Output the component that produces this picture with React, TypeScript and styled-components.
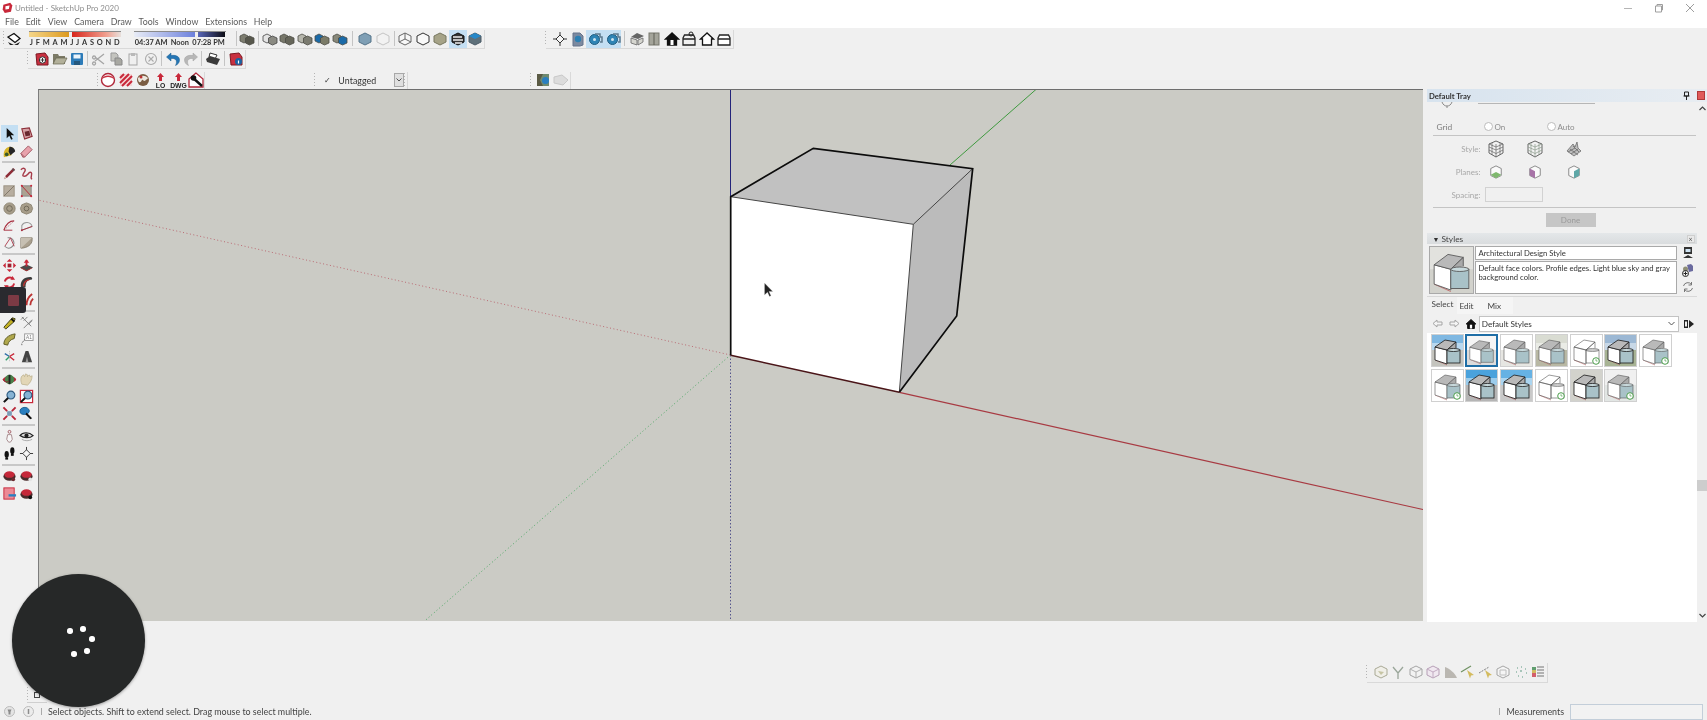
import React from 'react';
import styled, { createGlobalStyle } from 'styled-components';

const Global = createGlobalStyle`
  html, body { margin: 0; padding: 0; background: #f0f0f0; overflow: hidden; }
  * { box-sizing: border-box; }
`;

const Root = styled.div`
  position: relative;
  width: 1707px;
  height: 720px;
  display: flex;
  flex-direction: column;
  background: #f0f0f0;
  font-family: Lato, "Open Sans", sans-serif;
  color: #444;
  overflow: hidden;
  filter: blur(0.35px);
`;

const Header = styled.header`
  height: 28px;
  flex: none;
  background: #fff;
  display: flex;
  flex-direction: column;
`;
const TitleBar = styled.div`
  height: 15px;
  display: flex;
  align-items: center;
  padding-left: 2px;
`;
const TitleText = styled.span`
  margin-left: 2px;
  font-size: 8px;
  color: #8d8d8d;
`;
const WindowControls = styled.div`
  margin-left: auto;
  display: flex;
  padding-right: 2px;
`;
const WindowButton = styled.span`
  width: 31px;
  height: 14px;
  display: flex;
  align-items: center;
  justify-content: center;
`;
const MenuBar = styled.nav`
  height: 13px;
  display: flex;
  align-items: center;
  padding-left: 5px;
  gap: 6.9px;
`;
const MenuItem = styled.span`
  font-size: 8.8px;
  color: #5c5c5c;
`;

const Dock = styled.div`
  flex: none;
  height: 61px;
  display: flex;
  flex-direction: column;
`;
const DockRow = styled.div<{ $h: number; $pad: number }>`
  height: ${p => p.$h}px;
  display: flex;
  align-items: flex-end;
  padding-left: ${p => p.$pad}px;
`;
const Toolbar = styled.div<{ $gapLeft?: number; $h?: number }>`
  height: ${p => p.$h ?? 19}px;
  margin-left: ${p => p.$gapLeft ?? 0}px;
  display: flex;
  align-items: center;
  background: #f0f0f0;
  box-shadow: 1px 1px 0 #d9d9d9;
`;
const Grip = styled.span<{ $w: number }>`
  flex: none;
  width: ${p => p.$w}px;
  height: 15px;
  background: repeating-linear-gradient(#b5b5b5 0 1px, transparent 1px 3px) 0 0 / 1px 100% no-repeat;
`;
const ToolSlot = styled.span<{ $active?: boolean }>`
  flex: none;
  width: 17.5px;
  height: 18px;
  display: flex;
  align-items: center;
  justify-content: center;
  background: ${p => (p.$active ? '#c4dff3' : 'transparent')};
`;
const Sep = styled.span<{ $w: number }>`
  flex: none;
  width: ${p => p.$w}px;
  height: 15px;
  display: flex;
  justify-content: center;
  &::after { content: ""; width: 1px; background: #c4c4c4; }
`;
const ShadowBlock = styled.div`
  flex: none;
  width: 210.75px;
  padding-left: 6px;
  display: flex;
  gap: 13px;
`;
const SliderColumn = styled.div`
  width: 92px;
  display: flex;
  flex-direction: column;
`;
const SliderTrack = styled.div`
  height: 6px;
  display: flex;
  gap: 3px;
  border-top: 1px solid #8b8b8b;
`;
const SliderFill = styled.span<{ $w: number; $bg: string }>`
  width: ${p => p.$w}px;
  height: 5px;
  background: ${p => p.$bg};
`;
const SliderLabels = styled.div`
  margin-top: 1px;
  padding: 0 1px;
  display: flex;
  justify-content: space-between;
  font-size: 7.4px;
  line-height: 9px;
  font-weight: 700;
  color: #333;
`;
const TagCheck = styled.span`
  width: 22px;
  text-align: right;
  padding-right: 7px;
  font-size: 8px;
  color: #333;
`;
const TagName = styled.span`
  width: 56px;
  font-size: 8.8px;
  letter-spacing: 0.1px;
  color: #333;
`;
const TagArrow = styled.span`
  width: 10px;
  height: 14px;
  display: flex;
  align-items: center;
  justify-content: center;
  background: #e0e0e0;
  border: 1px solid #a8a8a8;
`;

const Main = styled.main`
  flex: none;
  height: 533px;
  display: flex;
`;
const LeftTools = styled.aside`
  width: 38px;
  flex: none;
  padding-top: 36px;
  display: flex;
  flex-direction: column;
  align-items: flex-start;
`;
const ToolGrid = styled.div`
  display: grid;
  grid-template-columns: 17.3px 17.3px;
  grid-auto-rows: 17.35px;
  padding-left: 1px;
  justify-items: center;
  align-items: center;
`;
const ToolDivider = styled.span`
  width: 33px;
  height: 2px;
  margin: 1.5px 0 1.5px 2px;
  background: #c8c8c8;
`;
const ActiveCell = styled.span<{ $active?: boolean }>`
  width: 17px;
  height: 17px;
  display: flex;
  align-items: center;
  justify-content: center;
  background: ${p => (p.$active ? '#c4dff3' : 'transparent')};
`;
const Viewport = styled.section`
  width: 1385px;
  height: 532px;
  flex: none;
  background: #cbcbc5;
  border-left: 1px solid #7c7c7c;
  border-top: 1px solid #6e6e6e;
  overflow: hidden;
`;
const Scene = styled.svg`
  display: block;
`;

const Tray = styled.aside`
  margin-left: 3px;
  flex: 1;
  display: flex;
  flex-direction: column;
`;
const TrayTitle = styled.div`
  height: 13px;
  margin-left: 1px;
  flex: none;
  display: flex;
  align-items: center;
  padding-left: 2px;
  background: linear-gradient(90deg, #d7e3ee, #e8edf2);
  font-size: 7.7px;
  font-weight: 700;
  color: #333;
`;
const TrayTitleIcons = styled.span`
  margin-left: auto;
  display: flex;
  align-items: center;
  gap: 7px;
  padding-right: 3px;
`;
const CloseBox = styled.span`
  width: 8px;
  height: 9px;
  background: #e05a5a;
  border: 1px solid #b03a3a;
  display: flex;
`;
const TrayBody = styled.div`
  flex: 1;
  display: flex;
`;
const TrayContent = styled.div`
  width: 270px;
  margin-left: 0.5px;
  display: flex;
  flex-direction: column;
`;
const Scroller = styled.div`
  width: 11px;
  display: flex;
  flex-direction: column;
  align-items: center;
  padding-top: 4px;
`;
const ScrollThumb = styled.span`
  width: 10px;
  height: 11px;
  margin-top: 369px;
  margin-bottom: 122px;
  background: #cdcdcd;
`;
const EntitySection = styled.div`
  height: 131px;
  flex: none;
  font-size: 8px;
  color: #a2a2a2;
  display: flex;
  flex-direction: column;
`;
const StubRow = styled.div`
  height: 8px;
  display: flex;
  padding-left: 13px;
  gap: 24px;
  align-items: flex-start;
`;
const StubLine = styled.span`
  width: 117px;
  height: 1px;
  background: #b6b6b6;
  margin-top: 0.5px;
`;
const GridRow = styled.div`
  margin-top: 10px;
  height: 13px;
  display: flex;
  align-items: center;
  padding-left: 10px;
`;
const GridLabel = styled.span`
  width: 47px;
  font-size: 8.4px;
  color: #7f7f7f;
`;
const RadioLabel = styled.label<{ $w: number }>`
  width: ${p => p.$w}px;
  display: flex;
  align-items: center;
  gap: 2px;
  color: #8c8c8c;
`;
const Radio = styled.span`
  width: 9px;
  height: 9px;
  border-radius: 50%;
  background: #fff;
  border: 1px solid #bcbcbc;
`;
const Rule = styled.hr<{ $mt: number }>`
  margin: ${p => p.$mt}px 0 0 6px;
  width: 263px;
  height: 1px;
  border: 0;
  background: #c4c4c4;
`;
const OptionGrid = styled.div`
  margin-top: 1px;
  display: grid;
  grid-template-columns: 54px 30px 48px 30px;
  grid-auto-rows: 23px;
  align-items: center;
  justify-items: center;
`;
const OptionLabel = styled.span`
  justify-self: end;
  font-size: 8px;
  color: #a8a8a8;
`;
const SpacingRow = styled.div`
  display: grid;
  grid-template-columns: 54px 58px;
  gap: 4px;
  align-items: center;
  margin-top: 4px;
  height: 15px;
`;
const SpacingInput = styled.span`
  height: 15px;
  border: 1px solid #d2d2d2;
`;
const DoneRow = styled.div`
  margin-top: 5px;
  padding-left: 119px;
`;
const DoneButton = styled.span`
  display: flex;
  align-items: center;
  justify-content: center;
  width: 50px;
  height: 14px;
  background: #c6c6c6;
  font-size: 8px;
  color: #9a9a9a;
`;
const SectionHead = styled.div`
  height: 11px;
  flex: none;
  display: flex;
  align-items: center;
  padding-left: 6px;
  background: linear-gradient(#e4e7e9, #d9dcde);
  font-size: 8.4px;
  color: #444;
`;
const HeadTriangle = styled.span`
  width: 9px;
  font-size: 7px;
  color: #333;
`;
const HeadClose = styled.span`
  margin-left: auto;
  margin-right: 2px;
  width: 8px;
  height: 8px;
  font-size: 7px;
  line-height: 7px;
  text-align: center;
  color: #555;
  background: #e9e9e9;
  border: 1px solid #cfcfcf;
`;
const InfoRow = styled.div`
  margin-top: 2px;
  height: 48px;
  flex: none;
  display: flex;
  padding-left: 2px;
`;
const PreviewFrame = styled.span`
  width: 45px;
  height: 48px;
  flex: none;
  border: 1px solid #a9a9a9;
  display: flex;
`;
const InfoFields = styled.div`
  width: 204px;
  margin-left: 1px;
  display: flex;
  flex-direction: column;
  gap: 1px;
`;
const NameField = styled.div`
  height: 14px;
  background: #fff;
  border: 1px solid #a9a9a9;
  padding-left: 3px;
  font-size: 7.7px;
  line-height: 12px;
  color: #333;
`;
const DescField = styled.div`
  height: 33px;
  background: #fff;
  border: 1px solid #a9a9a9;
  padding: 2px 3px;
  font-size: 7.7px;
  line-height: 9px;
  color: #333;
`;
const InfoIcons = styled.div`
  width: 18px;
  margin-left: 2px;
  display: flex;
  flex-direction: column;
  align-items: center;
  justify-content: space-between;
  padding: 0 0 1px;
`;
const TabRow = styled.div`
  margin-top: 2px;
  height: 18px;
  flex: none;
  border-top: 1px solid #d8d8d8;
  display: flex;
  padding-left: 2px;
`;
const Tab = styled.span<{ $w: number; $active?: boolean }>`
  width: ${p => p.$w}px;
  padding: ${p => (p.$active ? '2px 0 0 3px' : '4px 0 0 3px')};
  font-size: 8.2px;
  color: #444;
  background: ${p => (p.$active ? '#f0f0f0' : '#f5f5f5')};
`;
const NavRow = styled.div`
  height: 19px;
  flex: none;
  display: flex;
  align-items: center;
  padding-left: 3px;
`;
const NavSlot = styled.span`
  width: 16.5px;
  display: flex;
  justify-content: center;
`;
const NavSelect = styled.div`
  width: 201px;
  height: 16px;
  background: #fff;
  border: 1px solid #c3c3c3;
  display: flex;
  align-items: center;
  justify-content: space-between;
  padding: 0 3px 0 2px;
  font-size: 8.2px;
  color: #333;
`;
const NavEnd = styled.span`
  margin-left: 2px;
  width: 16px;
  display: flex;
  justify-content: center;
`;
const ThumbArea = styled.div`
  flex: 1;
  background: #fff;
  display: grid;
  grid-template-columns: repeat(7, 33px);
  grid-auto-rows: 33px;
  column-gap: 1.75px;
  row-gap: 2px;
  align-content: start;
  padding: 1px 0 0 4px;
`;
const ThumbCell = styled.span<{ $selected?: boolean }>`
  display: flex;
  width: 33px;
  height: 33px;
  border: ${p => (p.$selected ? '2px solid #1f6ea6' : '1px solid #d0d0d0')};
`;

const LowerDock = styled.div`
  flex: none;
  height: 81px;
  display: flex;
  align-items: flex-start;
`;
const LowerStub = styled.div`
  margin: 65px 0 0 27px;
  width: 20px;
  height: 15px;
  display: flex;
  align-items: center;
  box-shadow: 0 1px 0 #cfcfcf;
`;
const StubBox = styled.span`
  margin-left: 6px;
  width: 6px;
  height: 6px;
  border: 1px solid #444;
`;
const ViewsBar = styled(Toolbar)`
  margin: 40px 160px 0 auto;
  height: 20px;
  svg { opacity: 0.72; }
`;
const StatusBar = styled.footer`
  flex: 1;
  display: flex;
  align-items: center;
  font-size: 8.9px;
  color: #444;
`;
const StatusIcon = styled.span`
  width: 19px;
  display: flex;
  justify-content: center;
`;
const StatusSep = styled.span<{ $ml: number }>`
  margin-left: ${p => p.$ml}px;
  width: 1px;
  height: 7px;
  background: #aaa;
`;
const StatusText = styled.span`
  margin-left: 6px;
`;
const MeasureLabel = styled.span`
  margin-left: 6px;
`;
const MeasureBox = styled.span`
  margin-left: 6px;
  width: 133px;
  height: 16px;
  background: #f2f2f2;
  border: 1px solid #c3ced9;
`;
const StatusRight = styled.div`
  margin-left: auto;
  margin-right: 4px;
  display: flex;
  align-items: center;
`;

const Spinner = styled.div`
  position: absolute;
  left: 12px;
  top: 574px;
  width: 133px;
  height: 133px;
  border-radius: 50%;
  background: #262828;
  box-shadow: 0 1px 3px rgba(0,0,0,.35);
`;
const SpinnerDot = styled.span<{ $x: number; $y: number }>`
  position: absolute;
  left: ${p => p.$x - 2.7}px;
  top: ${p => p.$y - 2.7}px;
  width: 5.4px;
  height: 5.4px;
  border-radius: 50%;
  background: #fff;
`;
const RecordBox = styled.div`
  position: absolute;
  left: 0;
  top: 287px;
  width: 26px;
  height: 26px;
  border-radius: 0 3px 3px 0;
  background: #2a2a2f;
  display: flex;
  align-items: center;
  justify-content: center;
`;
const RecordSquare = styled.span`
  width: 11px;
  height: 11px;
  border-radius: 1px;
  background: #7c3a44;
`;

const Svg: React.FC<{ s?: number; children: React.ReactNode }> = ({ s = 16, children }) => (
  <svg width={s} height={s} viewBox="0 0 16 16" aria-hidden="true">{children}</svg>
);

const hex = (fill: string, stroke = '#6f6f6f', extra?: React.ReactNode) => (
  <>
    <path d="M8 2l6 3v6l-6 3-6-3V5z" fill={fill} stroke={stroke} />
    {extra}
  </>
);
const stack = (a: string, b: string, st = '#4d4d45') => (
  <>
    <path d="M1 5l4-2 4 2v5l-4 2-4-2z" fill={a} stroke={st} strokeWidth=".8" />
    <path d="M6.5 7l4-2 4.500 2v5l-4.500 2-4-2z" fill={b} stroke={st} strokeWidth=".8" />
  </>
);
const lens = (extra?: React.ReactNode) => (
  <>
    {extra}
    <circle cx="9.500" cy="6.500" r="4.200" fill="#86b3d4" stroke="#2d5a80" strokeWidth="1.200" />
    <path d="M6.500 9.500L2 14" stroke="#111" strokeWidth="2.200" />
  </>
);
const home = (fill: string, stroke: string, door?: boolean) => (
  <>
    <path d="M8 2L1.500 8H3.500v6h9V8h2z" fill={fill} stroke={stroke} strokeWidth="1.300" />
    {door && <rect x="6.500" y="9" width="3" height="5" fill="#fff" />}
  </>
);
const chest = (top: boolean) => (
  <>
    {top && <circle cx="10" cy="3" r="2" fill="none" stroke="#222" />}
    <path d="M2 7l1.500-3h9L14 7v7H2zM2 8h12" fill={top ? 'none' : '#fff'} stroke="#222" strokeWidth="1.300" />
  </>
);
const crosshair = (
  <>
    <path d="M8 1v14M1 8h14" stroke="#333" strokeWidth="1" />
    <path d="M8 4l4 4-4 4-4-4z" fill="#f6f6f6" stroke="#333" />
  </>
);
const sphereGear = (
  <>
    <circle cx="7.500" cy="8.500" r="5" fill="#2f84b5" stroke="#1e5c80" />
    <path d="M8 3h5v3h2v5h-2" fill="none" stroke="#5e7b8e" strokeWidth="1.500" />
    <circle cx="7.500" cy="8.500" r="1.500" fill="#cde3ef" />
  </>
);
const redBtn = (badge: string) => (
  <>
    <ellipse cx="8" cy="9" rx="6.500" ry="4.500" fill="#4a2c2c" />
    <ellipse cx="8" cy="7" rx="5.500" ry="3.500" fill="#c5283a" />
    <circle cx="12" cy="12" r="2" fill={badge} />
  </>
);

const icons: Record<string, React.ReactNode> = {
  shadow: (
    <>
      <path d="M2 11l6 3 6-3-2 3H4z" fill="#222" />
      <path d="M2 6l6-3.500 6 5-5 4z" fill="#fff" stroke="#111" strokeWidth="1.300" />
    </>
  ),
  s1: stack('#7d7d70', '#57574c'),
  s2: stack('#e4e4e4', '#8a8a82', '#444'),
  s3: stack('#77776a', '#66665a'),
  s4: stack('#b6b6ac', '#7b7b70'),
  s5: stack('#1a6aa8', '#7b7b68'),
  s6: stack('#88887a', '#1a6aa8'),
  hexBlue: hex('#7f9fb5', '#55748a'),
  hexPale: hex('#f2f2f2', '#c4c4c4'),
  hexWire: hex('#f7f7f7', '#666', <path d="M8 2v6L2 11M8 8l6 3" stroke="#666" fill="none" />),
  hexHollow: hex('#f9f9f9', '#333'),
  hexOlive: hex('#a6a388', '#77775f'),
  hexStripe: hex('#333', '#111', <path d="M3 6l9 0M3 9l10 0M5 12l7 0" stroke="#eee" strokeWidth="1.300" />),
  hexTop: hex('#5e707a', '#4a5a66', <path d="M2 5l6-3 6 3-6 3z" fill="#2888c8" />),
  cross: crosshair,
  docBlue: (
    <>
      <path d="M3 2h7l3 3v9l-3 1H3z" fill="#7c8aa0" stroke="#64728a" />
      <circle cx="8" cy="8" r="3.200" fill="#2c7fb2" />
    </>
  ),
  sphere: sphereGear,
  houseIso: (
    <>
      <path d="M8 2l7 3-6 3-7-2z" fill="#666" />
      <path d="M2 7l6 2v5l-6-2zM9 9l5-2v4l-5 3z" fill="#d6d6d0" stroke="#666" strokeWidth=".8" />
    </>
  ),
  door: (
    <>
      <rect x="3" y="2" width="10" height="12" fill="#a4a49a" stroke="#77776c" />
      <path d="M8 2v12" stroke="#5e5e55" />
    </>
  ),
  homeBlack: home('#111', '#111', true),
  boxLock: chest(true),
  homeOpen: home('#fff', '#111'),
  box: chest(false),
  newDoc: (
    <>
      <path d="M2 3l9-1 3 4v8H3z" fill="#c83040" stroke="#7c1822" />
      <circle cx="8.500" cy="9" r="3.200" fill="#fff" stroke="#333" />
      <path d="M6.500 9h4M8.500 7v4" stroke="#333" />
    </>
  ),
  folder: (
    <>
      <path d="M1 3h5l1 2h6v8H1z" fill="#7c7a66" />
      <path d="M4 7h11l-3 6H1z" fill="#b2b09a" stroke="#66644f" strokeWidth=".7" />
    </>
  ),
  save: (
    <>
      <rect x="2" y="2" width="12" height="12" rx="1" fill="#2c7bb8" />
      <rect x="4.500" y="3.500" width="7" height="4" fill="#eaf4fb" />
      <rect x="5" y="10" width="6" height="4" fill="#25587e" />
    </>
  ),
  scissors: <path d="M14 3L5 10M14 13L5 6M4 5a1.500 1.500 0 1 0 .1 0M4 11a1.500 1.500 0 1 0 .1 0" stroke="#a5a5a5" strokeWidth="1.300" fill="none" />,
  copy: (
    <>
      <path d="M3 2h5l2 2v6H3z" fill="#c4c4bf" stroke="#999" />
      <path d="M7 7h5l2 2v5H7z" fill="#a8a8a2" stroke="#888" />
    </>
  ),
  paste: (
    <>
      <rect x="4" y="3" width="8" height="11" fill="#efefef" stroke="#a5a5a5" />
      <rect x="6" y="2" width="4" height="3" fill="#b8b8b8" />
    </>
  ),
  cancel: (
    <>
      <circle cx="8" cy="8" r="5.500" fill="none" stroke="#aaa" strokeWidth="1.100" />
      <path d="M5.500 5.500l5 5M10.500 5.500l-5 5" stroke="#aaa" strokeWidth="1.100" />
    </>
  ),
  undo: <path d="M6 2L1.500 6 6 10V7.500c3.500-.5 5.500 1 5.500 3.500 0 1.200-.5 2.500-1 3.500 2.500-1 4-3 4-5.500C14.500 5.500 11 3.800 6 4.500z" fill="#2476b5" stroke="#1c5d8e" strokeWidth=".5" />,
  redo: <path d="M10 2l4.500 4L10 10V7.500C6.500 7 4.500 8.500 4.500 11c0 1.200.5 2.500 1 3.500-2.500-1-4-3-4-5.500C1.500 5.500 5 3.800 10 4.500z" fill="#b7b7b7" stroke="#a0a0a0" strokeWidth=".5" />,
  printer: (
    <>
      <path d="M5 2l7 2-2 4-6-2z" fill="#fff" stroke="#333" />
      <path d="M1 8l4-3 10 3-3 6-10-3z" fill="#3a3a3a" />
    </>
  ),
  infoDoc: (
    <>
      <path d="M2 3l9-1 3 4v8H3z" fill="#c83040" stroke="#7c1822" />
      <circle cx="10.500" cy="10.500" r="3.500" fill="#1b62a0" />
      <path d="M10.500 9.500v3" stroke="#fff" strokeWidth="1.200" />
    </>
  ),
  redCircle: (
    <>
      <circle cx="8" cy="8" r="6.500" fill="#fff" stroke="#b0283a" strokeWidth="1.400" />
      <path d="M1.500 7.500C5 4 11 4 14.500 7.500 13 2 3 2 1.500 7.500z" fill="#c83040" />
    </>
  ),
  hatch: (
    <>
      <rect x="2" y="2" width="12" height="12" fill="#f4d7d7" />
      <path d="M2 6l4-4M2 11l9-9M4 14l10-10M9 14l5-5" stroke="#c8283a" strokeWidth="2" />
    </>
  ),
  ball: (
    <>
      <circle cx="8" cy="8" r="6" fill="#7a5c42" />
      <path d="M3 6c3-3 7-3 10 0-1 2-2 1-3 3-2 0-2-2-3-1s-1 3-3 2c-1-1-1-3-1-4z" fill="#ece8df" />
      <circle cx="6" cy="5" r="1.500" fill="#b33" />
    </>
  ),
  homeWrench: (
    <>
      <path d="M8 1L1 7v8h14V7z" fill="#fff" stroke="#b0283a" strokeWidth="1.300" />
      <path d="M4 5l10 9" stroke="#111" strokeWidth="2.400" />
      <circle cx="5.500" cy="6" r="2.800" fill="#111" />
    </>
  ),
  preview: (
    <>
      <rect x="2" y="2" width="12" height="12" fill="#6f8a70" />
      <path d="M2 2h6l-3 6 3 6H2z" fill="#5a5a44" />
      <circle cx="10.500" cy="8.500" r="3.500" fill="#2a7fc0" />
    </>
  ),
  tagPale: <path d="M1 5l8-2 6 5-5 5-9-2z" fill="#dcdcdc" stroke="#c8c8c8" />,
  select: <path d="M5 2v11l2.800-2.500 2 4.200 1.600-.8-2-4H13z" fill="#111" />,
  comp: (
    <>
      <path d="M3 3l8-1 3 9-8 3z" fill="#d5a0a4" stroke="#8c2e38" strokeWidth="1.200" />
      <path d="M6 6l5-1 1 5-5 1z" fill="#67282e" />
    </>
  ),
  paint: (
    <>
      <path d="M2 14c-1-5 1-10 6-11l4 1-2 8z" fill="#d8b528" />
      <path d="M8 3c3 0 6 2 6 5l-5 4-2-4z" fill="#262626" />
      <circle cx="5" cy="11" r="2" fill="#3c5a28" />
    </>
  ),
  eraser: (
    <>
      <path d="M2 10l8-8 4 4-8 8H4z" fill="#e8a2ac" stroke="#a05560" />
      <path d="M2 10l4 4" stroke="#a05560" />
    </>
  ),
  pencil: (
    <>
      <path d="M2 14l2-4 8-8 2 2-8 8z" fill="#8e2c38" />
      <path d="M2 14l1.500-3 1.500 1.500z" fill="#dcb" />
      <path d="M11 3l2 2" stroke="#555" strokeWidth="1.500" />
    </>
  ),
  freehand: <path d="M2 4c3-3 6-1 4 2s-3 5 0 5 5-6 7-4-2 6 1 7" stroke="#a73c4a" strokeWidth="1.500" fill="none" />,
  rect: (
    <>
      <rect x="2" y="3" width="11" height="11" fill="#b7ad9f" stroke="#9a9082" />
      <path d="M2 14L13 3" stroke="#7f7568" />
    </>
  ),
  rotRect: (
    <>
      <rect x="3" y="3" width="10" height="11" fill="#ada292" stroke="#888" />
      <path d="M3 3L13 14" stroke="#b4293a" />
      <circle cx="3" cy="3" r="1.100" fill="#c8283a" />
      <circle cx="13" cy="3" r="1.100" fill="#c8283a" />
      <circle cx="3" cy="14" r="1.100" fill="#c8283a" />
      <circle cx="13" cy="14" r="1.100" fill="#c8283a" />
    </>
  ),
  circle: (
    <>
      <circle cx="8" cy="8" r="6" fill="#a79d8a" stroke="#8d8472" />
      <circle cx="8" cy="8" r="3" fill="none" stroke="#6f6858" />
    </>
  ),
  polygon: (
    <>
      <path d="M8 2l5 2 1.500 4-1.500 4-5 2-5-2L1.500 8 3 4z" fill="#a79d8a" stroke="#8d8472" />
      <circle cx="8" cy="8" r="2.500" fill="none" stroke="#6f6858" />
    </>
  ),
  arc1: (
    <>
      <path d="M2 13L13 3" stroke="#c28a92" strokeDasharray="2 1" />
      <path d="M2 13C4 7 8 3 13 3" stroke="#a83040" strokeWidth="1.200" fill="none" />
      <path d="M2 13l9 0" stroke="#a83040" />
    </>
  ),
  arc2: (
    <>
      <path d="M3 13V8a6 6 0 0 1 11 1z" fill="none" stroke="#999" strokeWidth="1.100" />
      <path d="M3 13L14 9" stroke="#a83040" />
      <circle cx="3" cy="13" r="1" fill="#a83040" />
    </>
  ),
  arc3: (
    <>
      <path d="M6 3a5.500 5.500 0 1 1-3 9" fill="none" stroke="#888" strokeWidth="1.100" />
      <path d="M3 12l6-9 4 9" fill="none" stroke="#b04050" />
    </>
  ),
  pie: (
    <>
      <path d="M2 3h12v2C14 10 9 14 2 14z" fill="#a99f8e" stroke="#8a8172" />
      <path d="M2 3l12 0-12 11z" fill="#c6bfb2" />
    </>
  ),
  move: (
    <>
      <path d="M8 1l3 3H5zM8 15l3-3H5zM1 8l3-3v6zM15 8l-3-3v6z" fill="#c8283a" />
      <rect x="6" y="6" width="4" height="4" fill="#a21f2e" />
    </>
  ),
  push: (
    <>
      <path d="M1 10l7-3 7 3-7 4z" fill="#4a4a4a" />
      <path d="M8 2v7" stroke="#c8283a" strokeWidth="2" />
      <path d="M5 5l3-3.500L11 5z" fill="#c8283a" />
      <path d="M2 10l6 3 6-3v1l-6 3-6-3z" fill="#a33" />
    </>
  ),
  rotate: (
    <>
      <path d="M3 7a5.500 5.500 0 0 1 9-3" fill="none" stroke="#c8283a" strokeWidth="2" />
      <path d="M13 9a5.500 5.500 0 0 1-9 3" fill="none" stroke="#c8283a" strokeWidth="2" />
      <path d="M11 1l3 4-5 0zM5 15l-3-4 5 0z" fill="#c8283a" />
    </>
  ),
  follow: (
    <>
      <path d="M2 13C1 6 5 2 12 2c2 0 3 2 1 3-4 0-6 2-6 8z" fill="#3c3c3c" />
      <path d="M5 12c0-4 2-6 6-7" stroke="#b33" strokeWidth="1.400" fill="none" />
    </>
  ),
  scale: <path d="M3 13L13 3M8 3h5v5" stroke="#c8283a" strokeWidth="2" fill="none" />,
  offset: <path d="M8 14C8 9 10 5 14 2M12 14c0-3 1-5 3-7" stroke="#b33" strokeWidth="2" fill="none" />,
  tape: (
    <>
      <path d="M2 13L11 3l3 1-1 3L4 15z" fill="#c2b024" stroke="#3b3b15" />
      <path d="M10 4l3 3" stroke="#111" strokeWidth="2" />
    </>
  ),
  dim: <path d="M3 2l10 10M9 2l-4 4M14 6l-4 4M2 5l3-3M5 14l9-9" stroke="#777" strokeWidth=".9" fill="none" />,
  protractor: <path d="M2 13C2 7 7 3 14 2l-1 5c-4 1-6 3-7 7z" fill="#b0a84c" stroke="#5d5a22" />,
  textTool: (
    <>
      <rect x="6" y="2" width="9" height="7" fill="#fff" stroke="#999" />
      <text x="7.500" y="7.500" fontSize="5" fontFamily="Liberation Sans" fill="#777">A1</text>
      <path d="M6 8L3 12v3" stroke="#444" fill="none" strokeDasharray="1 1" />
    </>
  ),
  axes: (
    <>
      <path d="M8 8L3 5" stroke="#2e6fa8" strokeWidth="1.500" />
      <path d="M8 8l5-3" stroke="#c8283a" strokeWidth="1.500" />
      <path d="M8 8L4 12" stroke="#2e9e6a" strokeWidth="1.500" />
      <path d="M8 8l5 4" stroke="#c8283a" strokeWidth="1.500" />
      <path d="M8 2v12" stroke="#b8b8b8" strokeDasharray="1 1" />
    </>
  ),
  text3d: (
    <>
      <path d="M3 14L7 2h3l4 12z" fill="#444" />
      <path d="M7 14l1.500-6L10 14z" fill="#999" />
    </>
  ),
  orbit: (
    <>
      <ellipse cx="8" cy="8" rx="7" ry="3.500" fill="#b8283a" />
      <circle cx="8" cy="8" r="5" fill="#49804a" />
      <path d="M8 3v10" stroke="#222" strokeWidth="2" />
      <path d="M1 8c2 3 4 3 6 2" stroke="#8c1c2a" fill="none" />
    </>
  ),
  pan: <path d="M3 13C1 8 2 4 5 3l1 2 1-3 2 1v2l2-2 1 2 2-1c0 4-2 8-5 10z" fill="#e2d6b6" stroke="#b6a985" strokeWidth=".7" />,
  zoom: lens(),
  zoomWin: lens(<rect x="1.500" y="1.500" width="13" height="13" fill="#fff" stroke="#c8283a" strokeWidth="1.300" />),
  zoomExt: (
    <>
      <rect x="5.500" y="5.500" width="5" height="5" fill="#7d9cb6" />
      <path d="M1.500 1.500l4 4M14.500 1.500l-4 4M1.500 14.500l4-4M14.500 14.500l-4-4" stroke="#b8283a" strokeWidth="2" />
    </>
  ),
  zoomPrev: (
    <>
      <path d="M1 6a5 4 0 0 1 10-1c0 3-3 4-5 4-3 0-5-1-5-3z" fill="#2a7fc0" stroke="#1b5f92" />
      <path d="M8 7l6 6-2 1-5-5z" fill="#111" />
    </>
  ),
  person: (
    <>
      <circle cx="8" cy="3" r="1.500" fill="none" stroke="#a05a62" />
      <path d="M6 6h4l1 5-2 3H7l-2-3z" fill="#f7f7f7" stroke="#a5898c" />
    </>
  ),
  eye: (
    <>
      <path d="M1 7c3-4 10-4 14 0-3 3-10 3-14 0z" fill="#ddd" stroke="#222" strokeWidth="1.300" />
      <circle cx="8" cy="7" r="2.200" fill="#222" />
      <path d="M3 11c3 2 8 2 11 0" stroke="#aaa" fill="none" />
    </>
  ),
  walk: (
    <>
      <ellipse cx="5" cy="9" rx="2.300" ry="3.700" fill="#111" />
      <rect x="3.500" y="12.500" width="3" height="2" fill="#111" />
      <ellipse cx="11" cy="5" rx="2.300" ry="3.700" fill="#111" />
      <rect x="9.500" y="8.500" width="3" height="2" fill="#111" />
    </>
  ),
  red1: redBtn('#6a2a30'),
  red2: redBtn('#e4e4e4'),
  red3: (
    <>
      <rect x="2" y="2" width="11" height="12" fill="#ec8a95" stroke="#c8283a" />
      <path d="M7 10h8" stroke="#2a7fc0" strokeWidth="2.500" />
    </>
  ),
  red4: redBtn('#111'),
  v1: hex('#f0efe6', '#8e8e72', <path d="M5 7l6 1-3 3z" fill="#b6b486" />),
  v2: <path d="M8 9L3 3M8 9l5-6M8 9v6" stroke="#7a8a7a" strokeWidth="1.300" fill="none" />,
  v3: hex('#f3f3f3', '#888', <path d="M2 5l6 3 6-3M8 8v6" stroke="#999" fill="none" />),
  v4: hex('#f0e6f0', '#a080a0', <path d="M2 5l6 3 6-3M8 8v6" stroke="#b090b0" fill="none" />),
  v5: <path d="M2 14V3c5 2 10 6 12 11z" fill="#a6a29a" />,
  v6: (
    <>
      <path d="M1 8l10-6" stroke="#3f6e2d" strokeWidth="1.200" />
      <path d="M7 6l7 5-3 .5-1 3z" fill="#c9a728" />
    </>
  ),
  v7: (
    <>
      <path d="M1 9l10-6" stroke="#555" strokeWidth="1" strokeDasharray="2 1" />
      <path d="M7 6l7 5-3 .5-1 3z" fill="#c9a728" />
    </>
  ),
  v8: hex('#f7f7f7', '#888', <path d="M5 6l6 0 0 5-6 0z" fill="none" stroke="#aaa" />),
  v9: <path d="M4 4h1M8 3h1M12 5h1M3 8h1M13 9h1M5 12h1M9 13h1M7 7h2" stroke="#6ba28c" strokeWidth="1.300" />,
  v10: (
    <>
      <path d="M2 3h4v3H2z" fill="#2a7f3e" />
      <path d="M2 6h4v3H2z" fill="#c9a728" />
      <path d="M2 9h4v4H2z" fill="#c8283a" />
      <path d="M7 3h7M7 6h7M7 9h7M7 12h7" stroke="#444" />
    </>
  ),
};

const Icon: React.FC<{ n: string; s?: number }> = ({ n, s }) => <Svg s={s}>{icons[n]}</Svg>;

const Slots: React.FC<{ items: string[]; active?: string[] }> = ({ items, active = [] }) => (
  <>
    {items.map((n, i) => (
      <ToolSlot key={n + i} $active={active.includes(n)}>
        <Icon n={n} />
      </ToolSlot>
    ))}
  </>
);

const LabelArrow: React.FC<{ label: string }> = ({ label }) => (
  <svg width="17" height="17" viewBox="0 0 17 17" aria-hidden="true">
    <path d="M8.500 1l3.500 4h-2v4H7V5H5z" fill="#c8283a" />
    <text x="8.500" y="15.500" textAnchor="middle" fontSize="6.800" fontWeight="700" fontFamily="Liberation Sans" fill="#222">
      {label}
    </text>
  </svg>
);

const MONTHS = ['J', 'F', 'M', 'A', 'M', 'J', 'J', 'A', 'S', 'O', 'N', 'D'];
const MENUS = ['File', 'Edit', 'View', 'Camera', 'Draw', 'Tools', 'Window', 'Extensions', 'Help'];

const toolGroups: [string, string][][] = [
  [['select', 'comp'], ['paint', 'eraser']],
  [['pencil', 'freehand'], ['rect', 'rotRect'], ['circle', 'polygon'], ['arc1', 'arc2'], ['arc3', 'pie']],
  [['move', 'push'], ['rotate', 'follow'], ['scale', 'offset']],
  [['tape', 'dim'], ['protractor', 'textTool'], ['axes', 'text3d']],
  [['orbit', 'pan'], ['zoom', 'zoomWin'], ['zoomExt', 'zoomPrev']],
  [['person', 'eye'], ['walk', 'cross']],
  [['red1', 'red2'], ['red3', 'red4']],
];

interface ThumbProps {
  sky?: string;
  ground?: string;
  bg?: string;
  badge?: boolean;
  wire?: boolean;
  roof?: string;
  heavy?: boolean;
}
const StyleThumb: React.FC<ThumbProps & { w?: number; h?: number }> = ({
  sky, ground, bg = '#fff', badge, wire, roof = '#b9b9b9', heavy, w = 31, h = 31,
}) => {
  const stroke = heavy ? '#222' : '#555';
  const sw = heavy ? 0.85 : 0.6;
  return (
    <svg width={w} height={h} viewBox="0 0 31 31" preserveAspectRatio="none" aria-hidden="true">
      <rect width="31" height="31" fill={bg} />
      {sky && <rect width="31" height="15" fill={sky} />}
      {sky && <rect y="8" width="31" height="7" fill="#fff" opacity=".45" />}
      {ground && <rect y="15" width="31" height="16" fill={ground} />}
      <path d="M3 25L15 30" stroke="#c06a6a" strokeWidth=".6" />
      <path d="M3 12V25L15 29V15z" fill={wire ? 'none' : '#fff'} stroke={stroke} strokeWidth={sw} />
      <path d="M3 12L13 5 24 7 15 15z" fill={wire ? 'none' : roof} stroke={stroke} strokeWidth={sw} />
      <path d="M15 15L24 7V13" fill={wire ? 'none' : '#a9a9a9'} stroke={stroke} strokeWidth={sw} />
      <rect x="15" y="15" width="13" height="13" fill={wire ? 'none' : '#a9c2c8'} stroke={stroke} strokeWidth={sw} />
      <ellipse cx="21.500" cy="15" rx="6.500" ry="1.500" fill={wire ? 'none' : '#c9dadd'} stroke={stroke} strokeWidth={sw} />
      {badge && (
        <>
          <circle cx="25" cy="26" r="3.300" fill="#fff" stroke="#4c9e4c" />
          <path d="M25 24.200V26h1.500" stroke="#4c9e4c" strokeWidth=".7" fill="none" />
        </>
      )}
    </svg>
  );
};

const BLUE = '#7fb8e2';
const thumbs: ThumbProps[] = [
  { sky: BLUE, ground: '#c4c4be', heavy: true },
  { bg: '#f5f5f5', ground: '#dcdcdc' },
  { bg: '#fff', ground: '#e6e6e2' },
  { sky: '#d9dcd2', ground: '#b8b8a4' },
  { bg: '#fff', wire: true, badge: true },
  { sky: '#9cb8d4', ground: '#a7b394', heavy: true },
  { bg: '#fff', badge: true },
  { bg: '#fff', badge: true },
  { sky: '#4aa2dc', ground: '#b5b5b5', heavy: true },
  { sky: '#66b2e4', ground: '#c9c9c9', heavy: true },
  { bg: '#fff', wire: true, badge: true },
  { bg: '#d2d2cc', heavy: true },
  { bg: '#f0f0f0', ground: '#e2e6e4', badge: true },
];

const DOTS: [number, number][] = [[58, 57], [71, 55], [80, 65], [75, 77], [62, 80]];

const PlaneIcon: React.FC<{ c: string; d: string }> = ({ c, d }) => (
  <svg width="14" height="14" viewBox="0 0 16 16" aria-hidden="true">
    <path d="M8 1l6 3v8l-6 3-6-3V4z" fill="#fafafa" stroke="#7e7e7e" />
    <path d={d} fill={c} />
  </svg>
);
const GridBall: React.FC<{ v: number }> = ({ v }) => (
  <svg width="18" height="18" viewBox="0 0 18 18" aria-hidden="true">
    {v < 2 ? (
      <>
        <path d="M9 1l7 3v9l-7 4-7-4V4z" fill="#f2f2f2" stroke="#666" />
        <path d="M2 7l7 3 7-3M2 10l7 3.500 7-3.500M5 3v12M13 3v12M9 4v13M2 4l7 3 7-3" stroke={v ? '#8a9a8a' : '#666'} strokeWidth=".7" fill="none" />
      </>
    ) : (
      <path d="M2 11l6-7 2 3 2-5 1 6 3 3-7 5zM5 9l8 6M8 6l6 6M3 12l7-4M6 14l7-5" fill="#bdbdbd" stroke="#5e5e5e" strokeWidth=".7" />
    )}
  </svg>
);

const App: React.FC = () => (
  <Root>
    <Global />
    <Header>
      <TitleBar>
        <svg width="11" height="11" viewBox="0 0 16 16" aria-hidden="true">
          <path d="M2 4l10-3 3 4-2 9-9 2-3-5z" fill="#c8283a" />
          <path d="M5 6l6-1-1 5-5 1z" fill="#fff" />
        </svg>
        <TitleText>Untitled - SketchUp Pro 2020</TitleText>
        <WindowControls>
          <WindowButton>
            <svg width="10" height="10" viewBox="0 0 10 10" aria-hidden="true"><path d="M1 5.500h8" stroke="#b5b5b5" /></svg>
          </WindowButton>
          <WindowButton>
            <svg width="10" height="10" viewBox="0 0 10 10" aria-hidden="true"><path d="M1.500 3h6v6h-6zM3 3V1.500h5.500V7H7.500" stroke="#9e9e9e" fill="none" /></svg>
          </WindowButton>
          <WindowButton>
            <svg width="10" height="10" viewBox="0 0 10 10" aria-hidden="true"><path d="M1 1l8 8M9 1l-8 8" stroke="#9e9e9e" /></svg>
          </WindowButton>
        </WindowControls>
      </TitleBar>
      <MenuBar>
        {MENUS.map(m => <MenuItem key={m}>{m}</MenuItem>)}
      </MenuBar>
    </Header>

    <Dock>
      <DockRow $h={20} $pad={3}>
        <Toolbar>
          <Grip $w={2.25} />
          <Slots items={['shadow']} />
          <ShadowBlock>
            <SliderColumn>
              <SliderTrack>
                <SliderFill $w={40} $bg="linear-gradient(90deg,#f5d68a,#dd9a1f)" />
                <SliderFill $w={49} $bg="linear-gradient(90deg,#d8261c,#f0a090 70%,#e8e0dc)" />
              </SliderTrack>
              <SliderLabels>{MONTHS.map((m, i) => <span key={i}>{m}</span>)}</SliderLabels>
            </SliderColumn>
            <SliderColumn>
              <SliderTrack>
                <SliderFill $w={61} $bg="linear-gradient(90deg,#e8ecf6,#6c80dc)" />
                <SliderFill $w={27} $bg="linear-gradient(90deg,#5866b8,#0c0c14)" />
              </SliderTrack>
              <SliderLabels>
                <span>04:37 AM</span>
                <span>Noon</span>
                <span>07:28 PM</span>
              </SliderLabels>
            </SliderColumn>
          </ShadowBlock>
          <Sep $w={5} />
          <Slots items={['s1']} />
          <Sep $w={5} />
          <Slots items={['s2', 's3', 's4', 's5', 's6']} />
          <Sep $w={8} />
          <Slots items={['hexBlue', 'hexPale']} />
          <Sep $w={5} />
          <Slots items={['hexWire', 'hexHollow', 'hexOlive', 'hexStripe', 'hexTop']} active={['hexStripe']} />
        </Toolbar>
        <Toolbar $gapLeft={61}>
          <Grip $w={6.25} />
          <Slots items={['cross', 'docBlue', 'sphere', 'sphere']} active={['sphere']} />
          <Sep $w={6.5} />
          <Slots items={['houseIso', 'door', 'homeBlack', 'boxLock', 'homeOpen', 'box']} />
        </Toolbar>
      </DockRow>
      <DockRow $h={20} $pad={27}>
        <Toolbar>
          <Grip $w={6.25} />
          <Slots items={['newDoc', 'folder', 'save']} />
          <Sep $w={3.5} />
          <Slots items={['scissors', 'copy', 'paste', 'cancel']} />
          <Sep $w={5} />
          <Slots items={['undo', 'redo']} />
          <Sep $w={5} />
          <Slots items={['printer']} />
          <Sep $w={5.5} />
          <Slots items={['infoDoc']} />
        </Toolbar>
      </DockRow>
      <DockRow $h={21} $pad={97}>
        <Toolbar $h={18}>
          <Grip $w={2.25} />
          <Slots items={['redCircle', 'hatch', 'ball']} />
          <ToolSlot><LabelArrow label="LO" /></ToolSlot>
          <ToolSlot><LabelArrow label="DWG" /></ToolSlot>
          <Slots items={['homeWrench']} />
        </Toolbar>
        <Toolbar $gapLeft={110} $h={18}>
          <Grip $w={2} />
          <TagCheck>✓</TagCheck>
          <TagName>Untagged</TagName>
          <TagArrow>
            <svg width="6" height="4" viewBox="0 0 6 4" aria-hidden="true"><path d="M.5.500L3 3 5.500.500" stroke="#555" fill="none" /></svg>
          </TagArrow>
          <Grip $w={3} />
        </Toolbar>
        <Toolbar $gapLeft={123} $h={18}>
          <Grip $w={4.25} />
          <Slots items={['preview', 'tagPale']} />
        </Toolbar>
      </DockRow>
    </Dock>

    <Main>
      <LeftTools>
        {toolGroups.map((group, gi) => (
          <React.Fragment key={gi}>
            {gi > 0 && <ToolDivider />}
            <ToolGrid>
              {group.flat().map((n, i) => (
                <ActiveCell key={n + i} $active={n === 'select'}>
                  <Icon n={n} s={15} />
                </ActiveCell>
              ))}
            </ToolGrid>
          </React.Fragment>
        ))}
      </LeftTools>
      <Viewport>
        <Scene width="1384" height="531" viewBox="39 90 1384 531">
          <path d="M730.500 90V197" stroke="#24247a" strokeWidth="1" />
          <path d="M730.500 355V621" stroke="#55558c" strokeWidth="1" strokeDasharray="1.500 2" />
          <path d="M950 165L1036.500 89" stroke="#3f9a3f" strokeWidth="1" />
          <path d="M730.500 355L424.600 621" stroke="#4fa866" strokeWidth="1" strokeDasharray="1 2.500" />
          <path d="M899.300 392.300L1423 509.500" stroke="#a83a42" strokeWidth="1.200" />
          <path d="M730.500 355L38 200" stroke="#b8606a" strokeWidth=".9" strokeDasharray="1 2.500" />
          <path d="M730.700 196.700L813.300 148.300 972.700 168.700 913.300 224.300z" fill="#c1c1c1" />
          <path d="M913.300 224.300L972.700 168.700 956.700 316 899.300 392.300z" fill="#bbb" />
          <path d="M730.700 196.700L913.300 224.300 899.300 392.300 730.700 355.300z" fill="#fff" />
          <path d="M730.700 196.700L913.300 224.300 972.700 168.700M913.300 224.300L899.300 392.300" fill="none" stroke="#454545" strokeWidth="1" />
          <path d="M730.700 355.300V196.700L813.300 148.300 972.700 168.700 956.700 316 899.300 392.300" fill="none" stroke="#0c0c0c" strokeWidth="1.700" />
          <path d="M730.700 355.300L899.300 392.300" fill="none" stroke="#4a1518" strokeWidth="1.500" />
          <path d="M764.500 283v12l3-2.800 2 4.300 1.500-.7-2-4.200h3.800z" fill="#222" stroke="#ddd" strokeWidth=".3" />
        </Scene>
      </Viewport>
      <Tray>
        <TrayTitle>
          Default Tray
          <TrayTitleIcons>
            <svg width="7" height="9" viewBox="0 0 7 9" aria-hidden="true"><path d="M1.500 1h4v4h-4zM.5 5h6M3.500 5v4" stroke="#222" fill="none" /></svg>
            <CloseBox />
          </TrayTitleIcons>
        </TrayTitle>
        <TrayBody>
          <TrayContent>
            <EntitySection>
              <StubRow>
                <svg width="14" height="6" viewBox="0 0 14 6" aria-hidden="true"><path d="M2 0c1 3 3 4 5 4s4-1 5-4M7 4v2" stroke="#8a8a8a" fill="none" /></svg>
                <StubLine />
              </StubRow>
              <GridRow>
                <GridLabel>Grid</GridLabel>
                <RadioLabel $w={63}><Radio />On</RadioLabel>
                <RadioLabel $w={60}><Radio />Auto</RadioLabel>
              </GridRow>
              <Rule $mt={2} />
              <OptionGrid>
                <OptionLabel>Style:</OptionLabel>
                <GridBall v={0} />
                <GridBall v={1} />
                <GridBall v={2} />
                <OptionLabel>Planes:</OptionLabel>
                <PlaneIcon c="#7fb86e" d="M2 11l6-3 6 3-6 4z" />
                <PlaneIcon c="#a874a8" d="M2 4l6 3v8l-6-3z" />
                <PlaneIcon c="#5fa8a8" d="M8 7l6-3v8l-6 3z" />
              </OptionGrid>
              <SpacingRow>
                <OptionLabel>Spacing:</OptionLabel>
                <SpacingInput />
              </SpacingRow>
              <Rule $mt={5} />
              <DoneRow><DoneButton>Done</DoneButton></DoneRow>
            </EntitySection>
            <SectionHead>
              <HeadTriangle>▼</HeadTriangle>Styles
              <HeadClose>×</HeadClose>
            </SectionHead>
            <InfoRow>
              <PreviewFrame>
                <StyleThumb w={43} h={46} bg="#e2e2de" ground="#d2d2cc" />
              </PreviewFrame>
              <InfoFields>
                <NameField>Architectural Design Style</NameField>
                <DescField>Default face colors. Profile edges. Light blue sky and gray background color.</DescField>
              </InfoFields>
              <InfoIcons>
                <svg width="12" height="13" viewBox="0 0 12 13" aria-hidden="true"><path d="M2 1h8v7H2zM1 12l5-3 5 3z" fill="#333" /><rect x="3.500" y="3" width="5" height="3" fill="#cfe3f2" /></svg>
                <svg width="14" height="14" viewBox="0 0 14 14" aria-hidden="true"><path d="M6 2l4-1 2 2v5l-4 1z" fill="#6a6a9e" /><circle cx="4.500" cy="6" r="2.500" fill="#8f8f76" /><circle cx="4.500" cy="10.500" r="3" fill="#fff" stroke="#222" /><path d="M2.500 10.500h4M4.500 8.500v4" stroke="#222" /></svg>
                <svg width="12" height="12" viewBox="0 0 12 12" aria-hidden="true"><path d="M1.500 5a4.500 4.500 0 0 1 8-1.500M10.500 7a4.500 4.500 0 0 1-8 1.500M9.500 1v3h-3M2.500 11V8h3" stroke="#777" fill="none" /></svg>
              </InfoIcons>
            </InfoRow>
            <TabRow>
              <Tab $w={28} $active>Select</Tab>
              <Tab $w={28}>Edit</Tab>
              <Tab $w={28}>Mix</Tab>
            </TabRow>
            <NavRow>
              <NavSlot>
                <svg width="11" height="9" viewBox="0 0 11 9" aria-hidden="true"><path d="M1 4.500L5 1v2h5v3H5v2z" fill="#f4f4f4" stroke="#a5a5a5" /></svg>
              </NavSlot>
              <NavSlot>
                <svg width="11" height="9" viewBox="0 0 11 9" aria-hidden="true"><path d="M10 4.500L6 1v2H1v3h5v2z" fill="#f4f4f4" stroke="#a5a5a5" /></svg>
              </NavSlot>
              <NavSlot><Icon n="homeBlack" s={12} /></NavSlot>
              <NavSelect>
                Default Styles
                <svg width="7" height="5" viewBox="0 0 7 5" aria-hidden="true"><path d="M.5 1L3.500 4 6.500 1" stroke="#555" fill="none" /></svg>
              </NavSelect>
              <NavEnd>
                <svg width="12" height="12" viewBox="0 0 12 12" aria-hidden="true"><path d="M1 2h4v8H1z" fill="#222" /><path d="M6 2l5 4-5 4z" fill="#222" /><rect x="2" y="3.500" width="2" height="5" fill="#eee" /></svg>
              </NavEnd>
            </NavRow>
            <ThumbArea>
              {thumbs.map((t, i) => (
                <ThumbCell key={i} $selected={i === 1}>
                  <StyleThumb {...t} w={i === 1 ? 29 : 31} h={i === 1 ? 29 : 31} />
                </ThumbCell>
              ))}
            </ThumbArea>
          </TrayContent>
          <Scroller>
            <svg width="7" height="5" viewBox="0 0 7 5" aria-hidden="true"><path d="M.5 4L3.500 1 6.500 4" stroke="#444" strokeWidth="1.200" fill="none" /></svg>
            <ScrollThumb />
            <svg width="7" height="5" viewBox="0 0 7 5" aria-hidden="true"><path d="M.5 1L3.500 4 6.500 1" stroke="#444" strokeWidth="1.200" fill="none" /></svg>
          </Scroller>
        </TrayBody>
      </Tray>
    </Main>

    <LowerDock>
      <LowerStub>
        <Grip $w={1} />
        <StubBox />
      </LowerStub>
      <ViewsBar>
        <Grip $w={6.25} />
        <Slots items={['v1', 'v2', 'v3', 'v4', 'v5', 'v6', 'v7', 'v8', 'v9', 'v10']} />
      </ViewsBar>
    </LowerDock>

    <StatusBar>
      <StatusIcon>
        <svg width="11" height="11" viewBox="0 0 11 11" aria-hidden="true"><circle cx="5.500" cy="5.500" r="5" fill="#e4e4e4" stroke="#bbb" /><path d="M3.500 3.500h4L6.500 6v2.500h-2V6z" fill="#8c8c8c" /></svg>
      </StatusIcon>
      <StatusIcon>
        <svg width="11" height="11" viewBox="0 0 11 11" aria-hidden="true"><circle cx="5.500" cy="5.500" r="5" fill="#ececec" stroke="#bbb" /><path d="M5.500 3v5" stroke="#8c8c8c" strokeWidth="1.500" /></svg>
      </StatusIcon>
      <StatusSep $ml={3} />
      <StatusText>Select objects. Shift to extend select. Drag mouse to select multiple.</StatusText>
      <StatusRight>
        <StatusSep $ml={0} />
        <MeasureLabel>Measurements</MeasureLabel>
        <MeasureBox />
      </StatusRight>
    </StatusBar>

    <RecordBox>
      <RecordSquare />
    </RecordBox>
    <Spinner>
      {DOTS.map(([x, y]) => <SpinnerDot key={x} $x={x} $y={y} />)}
    </Spinner>
  </Root>
);

export default App;
